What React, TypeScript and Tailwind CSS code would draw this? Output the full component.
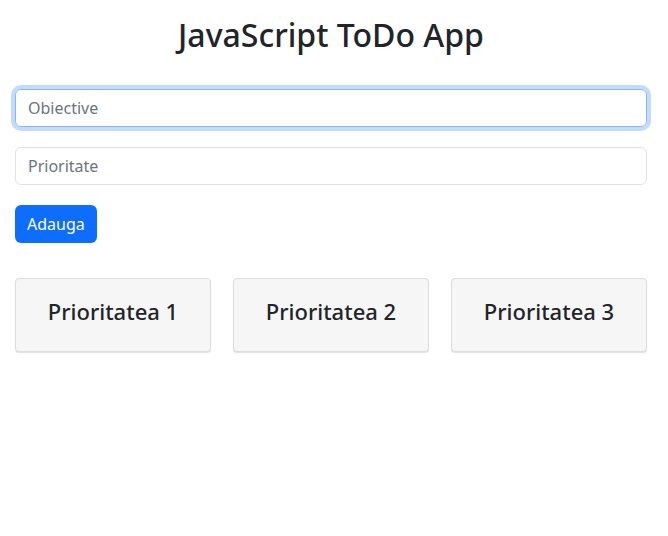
import React from 'react';

const App: React.FC = () => {
  const priorities = ['Prioritatea 1', 'Prioritatea 2', 'Prioritatea 3'];

  return (
    <div className="min-h-screen bg-white pl-[15px] pr-[21px] font-['Noto_Sans',sans-serif] text-[#212529]">
      {/* Title */}
      <h1 className="pt-[16px] text-center text-[32px] font-medium leading-[1.2]">JavaScript ToDo App</h1>

      {/* Form */}
      <div className="mt-[35px] flex flex-col gap-5">
        <input
          placeholder="Obiective"
          className="h-[38px] w-full rounded-[6px] border border-[#86b7fe] px-3 text-base text-[#212529] shadow-[0_0_0_4px_rgba(13,110,253,0.25)] outline-none placeholder:text-[#6c757d]"
        />
        <input
          placeholder="Prioritate"
          className="h-[38px] w-full rounded-[6px] border border-[#dee2e6] px-3 text-base text-[#212529] outline-none placeholder:text-[#6c757d]"
        />
        <div>
          <button className="h-[38px] rounded-[6px] bg-[#0d6efd] px-3 text-base text-white">Adauga</button>
        </div>
      </div>

      {/* Priority columns */}
      <div className="mt-[35px] grid grid-cols-3 gap-[22px]">
        {priorities.map(p => (
          <div
            key={p}
            className="flex h-[74px] items-center justify-center rounded-[4px] border border-[#dddddd] bg-[#f6f6f6] pb-[8px] shadow-[0_1px_1px_rgba(0,0,0,0.12)]"
          >
            <h3 className="text-[22px] font-medium leading-[1.2]">{p}</h3>
          </div>
        ))}
      </div>
    </div>
  );
};

export default App;
